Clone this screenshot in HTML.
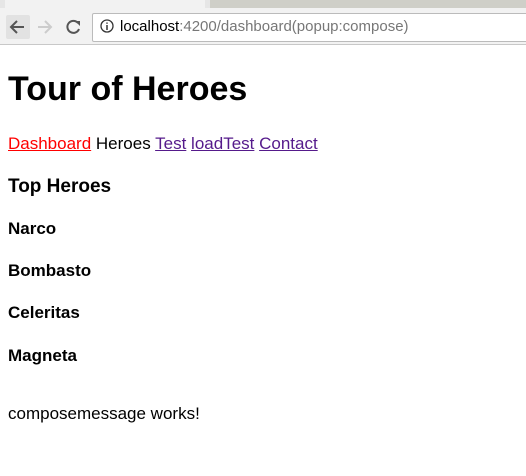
<!DOCTYPE html>
<html><head><style>
body{margin:0;width:526px;height:476px;background:#fff;font-family:"Liberation Sans",sans-serif;position:relative;overflow:hidden}
.t{position:absolute;left:8px;line-height:1;white-space:nowrap;color:#000}
a{text-decoration:underline;color:#551a8b}
</style></head><body>
<div style="position:absolute;left:0;top:0;width:526px;height:44px;background:#f2f2f2;border-bottom:1px solid #c8c8c8"></div>
<div style="position:absolute;left:0;top:0;width:526px;height:8px;background:#e6e6e6"></div>
<div style="position:absolute;left:5px;top:0;width:200px;height:8px;background:#f2f2f2"></div>
<div style="position:absolute;left:210px;top:0;width:316px;height:8px;background:#cfcfc8"></div>
<div style="position:absolute;left:6px;top:15px;width:24px;height:24px;background:#e2e2e2;border-radius:2px"></div>
<svg style="position:absolute;left:0;top:10px" width="90" height="34">
<path d="M24 17H11M17 11l-6 6 6 6" stroke="#555" stroke-width="2" fill="none"/>
<path d="M38 17h13M45 11l6 6-6 6" stroke="#ccc" stroke-width="2" fill="none"/>
<path d="M78 13a6 6 0 1 0 1 6" stroke="#555" stroke-width="2" fill="none"/>
<path d="M75 11h5v5z" fill="#555"/>
</svg>
<div style="position:absolute;left:92px;top:13px;width:440px;height:27px;background:#fff;border:1px solid #bbb;border-radius:2px"></div>
<svg style="position:absolute;left:100px;top:19px" width="14" height="14"><circle cx="7" cy="7" r="6" stroke="#333" stroke-width="1.3" fill="none"/><path d="M7 6v5M7 3.5v1.3" stroke="#333" stroke-width="1.5"/></svg>
<div class="t" style="left:120px;top:19px;font-size:15px;color:#777">
<span style="color:#000">localhost</span>:4200/dashboard(popup:compose)</div>
<div class="t" style="top:72px;font-size:34px;font-weight:bold">Tour of Heroes</div>
<div class="t" style="top:135px;font-size:17px"><a style="color:#f00">Dashboard</a> Heroes <a>Test</a> <a>loadTest</a> <a>Contact</a></div>
<div class="t" style="top:177px;font-size:19px;font-weight:bold">Top Heroes</div>
<div class="t" style="top:220px;font-size:17px;font-weight:bold">Narco</div>
<div class="t" style="top:262px;font-size:17px;font-weight:bold">Bombasto</div>
<div class="t" style="top:304px;font-size:17px;font-weight:bold">Celeritas</div>
<div class="t" style="top:347px;font-size:17px;font-weight:bold">Magneta</div>
<div class="t" style="top:405px;font-size:17px">composemessage works!</div>
</body></html>
